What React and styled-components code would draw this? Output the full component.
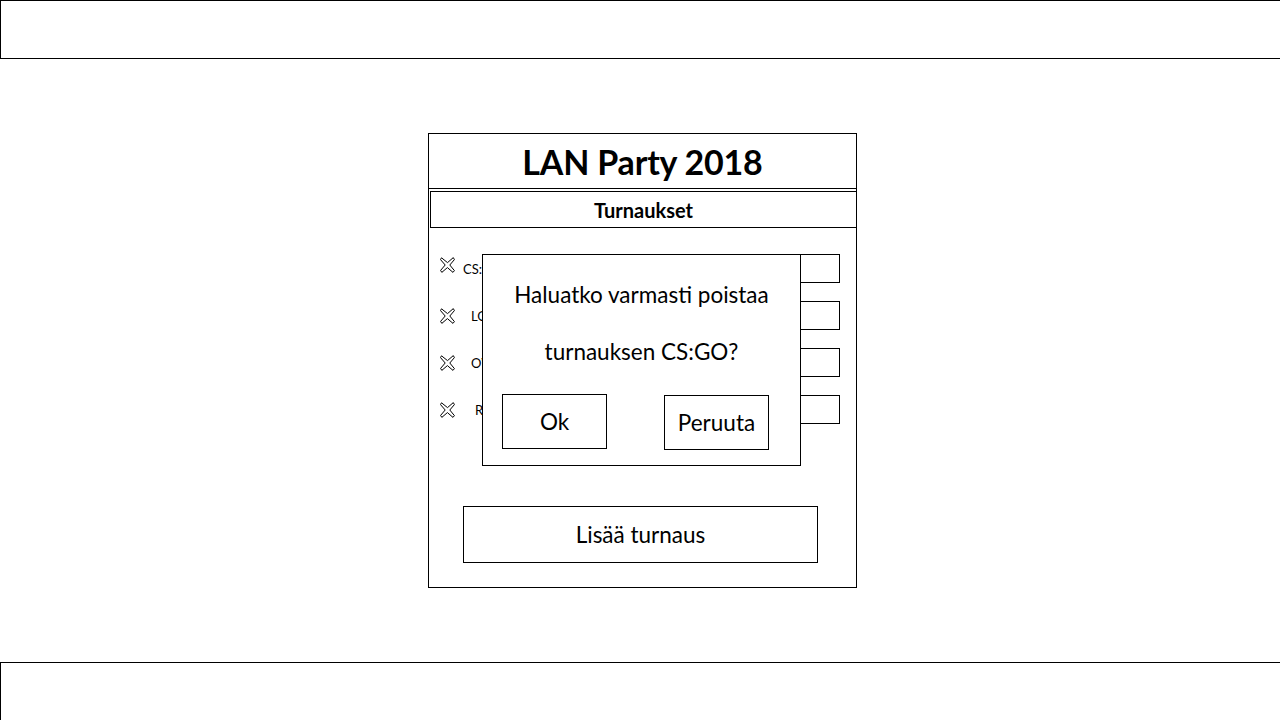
import React from 'react';
import styled, { createGlobalStyle } from 'styled-components';

const Global = createGlobalStyle`
  html, body {
    margin: 0;
    padding: 0;
    background: #fff;
    overflow: hidden;
  }
  body {
    font-family: Lato, "Open Sans", sans-serif;
    color: #000;
  }
`;

const tournaments = [
  { name: 'CS:GO', indent: 8, shift: -8 },
  { name: 'LOL', indent: 16, shift: 1 },
  { name: 'OW', indent: 16, shift: 0 },
  { name: 'RL', indent: 20, shift: 1 },
];

const CrossIcon = ({ shift }) => (
  <Cross $shift={shift} width="15" height="16" viewBox="0 0 15 16">
    <path
      d="M1.5 0.8 L7.5 5.6 L13.3 0.6 L14.4 2.6 L9.8 8 L14.4 13.6 L13 15.4 L7.4 10.6 L1.8 15.4 L0.6 13.4 L5.2 8 L0.5 2.6 Z"
      fill="none"
      stroke="#000"
      strokeWidth="1"
      strokeLinejoin="round"
    />
  </Cross>
);

const App = () => <Page>
  <Global />
  <TopBar />
  <Main>
    <Card>
      <Title>LAN Party 2018</Title>
      <SectionHeader>Turnaukset</SectionHeader>
      <List>
        {tournaments.map(t => (
          <Row key={t.name}>
            <CrossIcon shift={t.shift} />
            <Label $indent={t.indent}>{t.name}</Label>
            <Field />
          </Row>
        ))}
      </List>
      <AddButton>Lisää turnaus</AddButton>
      <Dialog>
        <Question>Haluatko varmasti poistaa</Question>
        <Question>turnauksen CS:GO?</Question>
        <Actions>
          <DialogButton>Ok</DialogButton>
          <DialogButton $lower>Peruuta</DialogButton>
        </Actions>
      </Dialog>
    </Card>
  </Main>
  <BottomBar />
</Page>

const Page = styled.div`
  display: flex;
  flex-direction: column;
  width: 1280px;
  height: 720px;
  overflow: hidden;
`;

const Bar = styled.div`
  box-sizing: border-box;
  width: 1290px;
  flex: none;
  border: 1px solid #000;
  height: ${p => p.$height}px;
`;

const TopBar = () => <Bar as="header" $height={59} />;
const BottomBar = () => <Bar as="footer" $height={70} />;

const Main = styled.main`
  box-sizing: border-box;
  height: 603px;
  flex: none;
  padding: 74px 0 0 428px;
`;

const Card = styled.section`
  position: relative;
  box-sizing: border-box;
  width: 429px;
  height: 455px;
  border: 1px solid #000;
  display: flex;
  flex-direction: column;
`;

const Title = styled.h1`
  margin: 0;
  height: 54px;
  border-bottom: 1px solid #000;
  display: flex;
  align-items: center;
  justify-content: center;
  font-size: 34px;
  font-weight: 700;
  letter-spacing: -0.2px;
`;

const SectionHeader = styled.h2`
  box-sizing: border-box;
  margin: 2px -1px 0 1px;
  height: 37px;
  border: 1px solid #000;
  display: flex;
  align-items: center;
  justify-content: center;
  font-size: 20px;
  font-weight: 700;
`;

const List = styled.ul`
  list-style: none;
  margin: 0;
  padding: 26px 16px 0 11px;
  display: flex;
  flex-direction: column;
  gap: 18px;
`;

const Row = styled.li`
  display: flex;
  align-items: center;
  height: 29px;
`;

const Cross = styled.svg`
  flex: none;
  margin-top: ${p => p.$shift}px;
`;

const Label = styled.span`
  margin-left: ${p => p.$indent}px;
  font-size: 13px;
`;

const Field = styled.div`
  box-sizing: border-box;
  margin-left: auto;
  width: 150px;
  height: 29px;
  border: 1px solid #000;
`;

const AddButton = styled.button`
  box-sizing: border-box;
  margin: 82px 0 0 34px;
  width: 355px;
  height: 57px;
  border: 1px solid #000;
  background: #fff;
  font-family: Lato, "Open Sans", sans-serif;
  font-size: 22.5px;
  color: #000;
  padding: 0;
`;

const Dialog = styled.div`
  position: absolute;
  left: 53px;
  top: 120px;
  box-sizing: border-box;
  width: 319px;
  height: 212px;
  border: 1px solid #000;
  background: #fff;
  padding-top: 11px;
  display: flex;
  flex-direction: column;
  align-items: center;
`;

const Question = styled.p`
  margin: 0;
  line-height: 57px;
  font-size: 22.5px;
`;

const Actions = styled.div`
  align-self: stretch;
  display: flex;
  justify-content: space-between;
  align-items: flex-start;
  padding: 0 31px 0 19px;
  margin-top: 14px;
`;

const DialogButton = styled.button`
  box-sizing: border-box;
  width: 105px;
  height: 55px;
  margin-top: ${p => (p.$lower ? 1 : 0)}px;
  border: 1px solid #000;
  background: #fff;
  padding: 0;
  font-family: Lato, "Open Sans", sans-serif;
  font-size: 22.5px;
  color: #000;
`;

export default App;
